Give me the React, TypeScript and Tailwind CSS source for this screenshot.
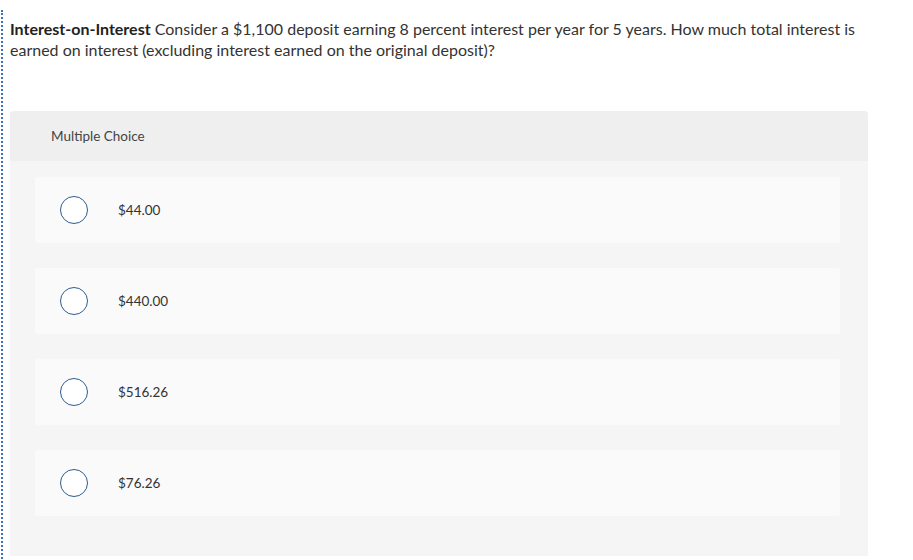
export default function App() {
  const options = ["$44.00", "$440.00", "$516.26", "$76.26"];
  return (
    <div className="h-[560px] w-full overflow-hidden bg-white" style={{ fontFamily: "Lato, 'Open Sans', sans-serif" }}>
      <div className="ml-px mt-[10px] h-[560px] border-l-2 border-dotted border-[#3b72bd] pl-[7px] pt-[8px]">
        <p className="w-[860px] text-[16px] leading-[21px] text-[#333333]">
          <strong className="font-bold text-[#222]">Interest-on-Interest</strong> Consider a $1,100 deposit earning 8 percent interest per year for 5 years. How much total interest is earned on interest (excluding interest earned on the original deposit)?
        </p>
        <div className="mt-[51px] w-[858px] rounded-t-sm bg-[#f5f5f5]">
          <div className="flex h-[50px] items-center rounded-t-sm bg-[#efefef] pl-[41px] text-[13.5px] text-[#444]">
            Multiple Choice
          </div>
          <div className="flex flex-col gap-[25px] pb-10 pl-[25px] pr-[28px] pt-[16px]">
            {options.map((o) => (
              <div key={o} className="flex h-[66px] items-center rounded-[3px] bg-[#fafafa] pl-[25px]">
                <span className="box-border h-[28px] w-[28px] rounded-full border-[1.5px] border-[#2c5d91] bg-white" />
                <span className="ml-[30px] text-[13.5px] text-[#333]">{o}</span>
              </div>
            ))}
          </div>
        </div>
      </div>
    </div>
  );
}
